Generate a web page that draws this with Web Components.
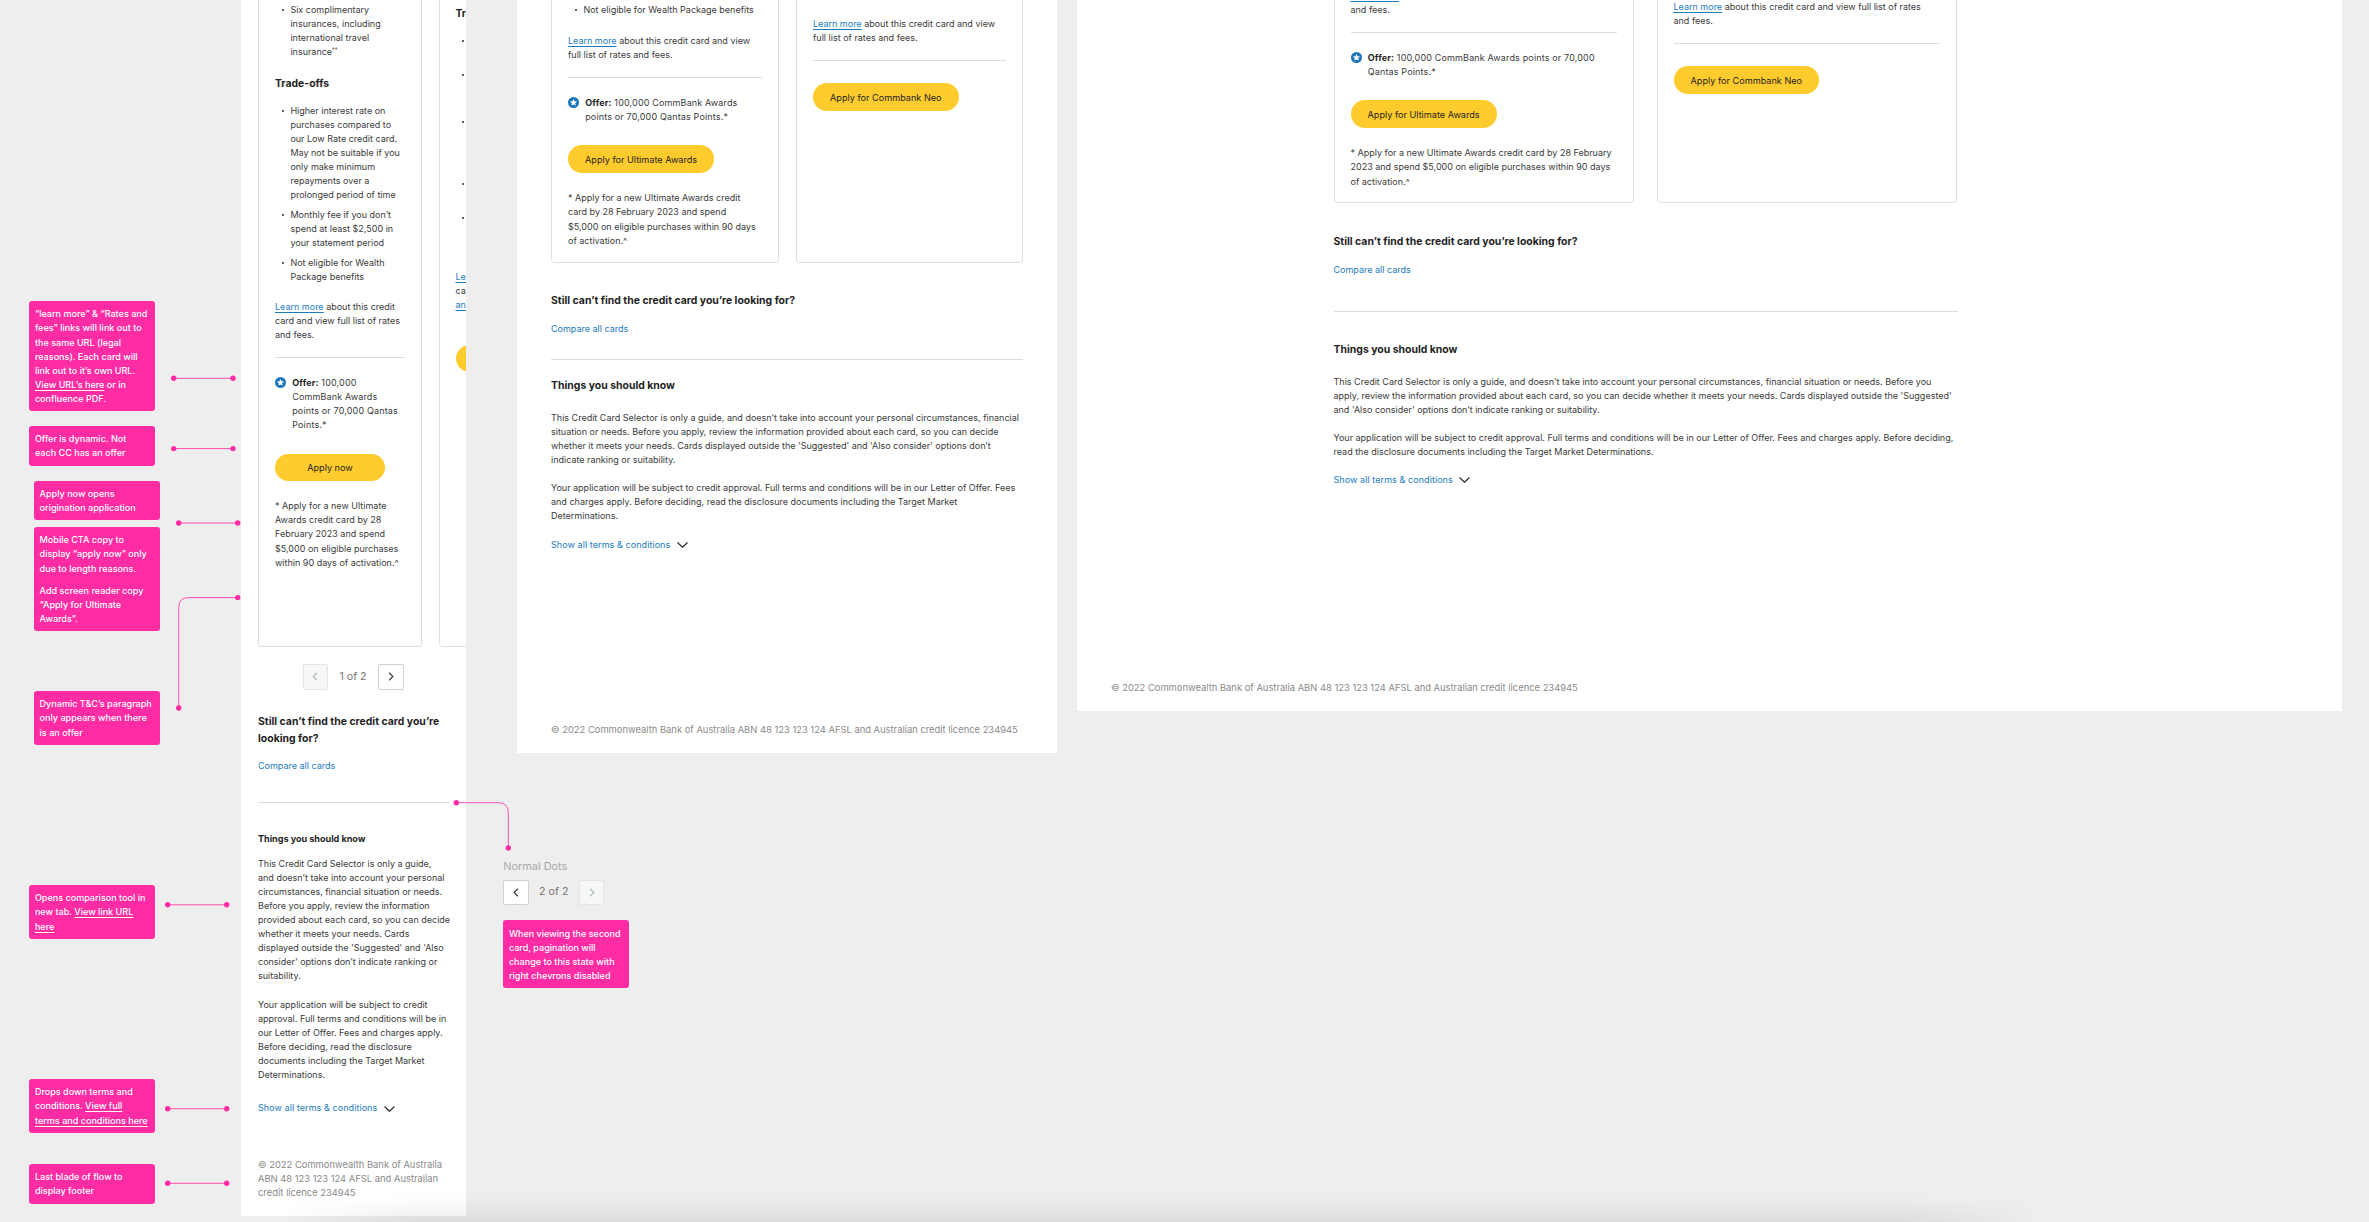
<!doctype html>
<html lang="en">
<head>
<meta charset="utf-8">
<title>Credit card selector annotations</title>
<style>
	html, body { margin: 0; padding: 0; background: #eeeeee; }
</style>
</head>
<body>
<cc-board>

	<!-- mobile blade -->
	<cc-artboard style="--x:240.5px;--w:225px;--h:1216px;--pad:17.5px">
		<cc-cards style="--h:647px;--gap:17px">
			<cc-card style="--w:163.5px;--pt:3px">
				<cc-bullet>Six complimentary<br>insurances, including<br>international travel<br>insurance<sup>††</sup></cc-bullet>
				<cc-heading style="margin-top:16px">Trade-offs</cc-heading>
				<cc-bullet style="margin-top:11.5px">Higher interest rate on<br>purchases compared to<br>our Low Rate credit card.<br>May not be suitable if you<br>only make minimum<br>repayments over a<br>prolonged period of time</cc-bullet>
				<cc-bullet style="margin-top:5.5px">Monthly fee if you don’t<br>spend at least $2,500 in<br>your statement period</cc-bullet>
				<cc-bullet style="margin-top:5.8px">Not eligible for Wealth<br>Package benefits</cc-bullet>
				<cc-para style="margin-top:16.4px"><cc-link underline>Learn more</cc-link> about this credit<br>card and view full list of rates<br>and fees.</cc-para>
				<cc-rule style="margin-top:15px"></cc-rule>
				<cc-offer style="margin-top:17.4px"><b>Offer:</b> 100,000<br>CommBank Awards<br>points or 70,000 Qantas<br>Points.*</cc-offer>
				<cc-apply style="margin-top:21.8px;width:110px;height:27.5px;padding:1px 0 0">Apply now</cc-apply>
				<cc-para style="margin-top:18px">* Apply for a new Ultimate<br>Awards credit card by 28<br>February 2023 and spend<br>$5,000 on eligible purchases<br>within 90 days of activation.^</cc-para>
			</cc-card>
			<cc-card style="--w:163.5px;--pt:4.5px">
				<cc-heading>Trade-offs</cc-heading>
				<cc-bullet style="margin-top:12px" lines="2"></cc-bullet>
				<cc-bullet style="margin-top:6px" lines="3"></cc-bullet>
				<cc-bullet style="margin-top:5px" lines="4"></cc-bullet>
				<cc-bullet style="margin-top:6px" lines="2"></cc-bullet>
				<cc-bullet style="margin-top:6px" lines="3"></cc-bullet>
				<cc-para style="margin-top:16.2px"><cc-link underline>Learn more</cc-link> about this credit<br>card and view full list of rates<br><cc-link underline>and fees.</cc-link></cc-para>
				<cc-apply style="margin-top:33px;width:110px;height:27.5px;padding:1px 0 0">Apply now</cc-apply>
			</cc-card>
		</cc-cards>
		<cc-pager style="margin:17px auto 0" page="1"></cc-pager>
		<cc-heading style="margin-top:23px">Still can’t find the credit card you’re<br>looking for?</cc-heading>
		<cc-link style="margin-top:12.9px;display:block">Compare all cards</cc-link>
		<cc-rule style="margin-top:28.9px;width:191px"></cc-rule>
		<cc-heading size="small" style="margin-top:28.3px">Things you should know</cc-heading>
		<cc-para style="margin-top:11.3px">This Credit Card Selector is only a guide,<br>and doesn’t take into account your personal<br>circumstances, financial situation or needs.<br>Before you apply, review the information<br>provided about each card, so you can decide<br>whether it meets your needs. Cards<br>displayed outside the 'Suggested' and 'Also<br>consider' options don’t indicate ranking or<br>suitability.</cc-para>
		<cc-para style="margin-top:14px">Your application will be subject to credit<br>approval. Full terms and conditions will be in<br>our Letter of Offer. Fees and charges apply.<br>Before deciding, read the disclosure<br>documents including the Target Market<br>Determinations.</cc-para>
		<cc-terms style="margin-top:19.6px"></cc-terms>
		<cc-legal>© 2022 Commonwealth Bank of Australia<br>ABN 48 123 123 124 AFSL and Australian<br>credit licence 234945</cc-legal>
	</cc-artboard>

	<!-- tablet blade -->
	<cc-artboard style="--x:517px;--w:540px;--h:753px;--pad:34px">
		<cc-cards style="--h:262.7px;--gap:17.5px">
			<cc-card style="--w:227.5px;--pt:3px">
				<cc-bullet>Not eligible for Wealth Package benefits</cc-bullet>
				<cc-para style="margin-top:16.7px"><cc-link underline>Learn more</cc-link> about this credit card and view<br>full list of rates and fees.</cc-para>
				<cc-rule style="margin-top:15.5px"></cc-rule>
				<cc-offer style="margin-top:17.4px"><b>Offer:</b> 100,000 CommBank Awards<br>points or 70,000 Qantas Points.*</cc-offer>
				<cc-apply style="margin-top:21.2px">Apply for Ultimate Awards</cc-apply>
				<cc-para style="margin-top:18px">* Apply for a new Ultimate Awards credit<br>card by 28 February 2023 and spend<br>$5,000 on eligible purchases within 90 days<br>of activation.^</cc-para>
			</cc-card>
			<cc-card style="--w:227px;--pt:17px">
				<cc-para><cc-link underline>Learn more</cc-link> about this credit card and view<br>full list of rates and fees.</cc-para>
				<cc-rule style="margin-top:15.2px"></cc-rule>
				<cc-apply style="margin-top:21.7px">Apply for Commbank Neo</cc-apply>
			</cc-card>
		</cc-cards>
		<cc-heading style="margin-top:29.1px">Still can’t find the credit card you’re looking for?</cc-heading>
		<cc-link style="margin-top:13.2px;display:block">Compare all cards</cc-link>
		<cc-rule style="margin-top:23.3px;width:472px"></cc-rule>
		<cc-heading style="margin-top:16.5px">Things you should know</cc-heading>
		<cc-para style="margin-top:17.2px">This Credit Card Selector is only a guide, and doesn’t take into account your personal circumstances, financial<br>situation or needs. Before you apply, review the information provided about each card, so you can decide<br>whether it meets your needs. Cards displayed outside the 'Suggested' and 'Also consider' options don’t<br>indicate ranking or suitability.</cc-para>
		<cc-para style="margin-top:14px">Your application will be subject to credit approval. Full terms and conditions will be in our Letter of Offer. Fees<br>and charges apply. Before deciding, read the disclosure documents including the Target Market<br>Determinations.</cc-para>
		<cc-terms style="margin-top:14.2px"></cc-terms>
		<cc-legal>© 2022 Commonwealth Bank of Australia ABN 48 123 123 124 AFSL and Australian credit licence 234945</cc-legal>
	</cc-artboard>

	<!-- desktop blade -->
	<cc-artboard style="--x:1077px;--w:1265px;--h:711px;--pad:34px">
		<cc-stack style="margin-left:222.5px;width:624px">
			<cc-cards style="--h:203px;--gap:23px">
				<cc-card style="--w:300px;--pt:0px">
					<cc-para style="margin-top:-11px"><cc-link underline>Learn more</cc-link> about this credit card and view full list of rates<br>and fees.</cc-para>
					<cc-rule style="margin-top:15.3px"></cc-rule>
					<cc-offer style="margin-top:17.4px"><b>Offer:</b> 100,000 CommBank Awards points or 70,000<br>Qantas Points.*</cc-offer>
					<cc-apply style="margin-top:21.2px">Apply for Ultimate Awards</cc-apply>
					<cc-para style="margin-top:18px">* Apply for a new Ultimate Awards credit card by 28 February<br>2023 and spend $5,000 on eligible purchases within 90 days<br>of activation.^</cc-para>
				</cc-card>
				<cc-card style="--w:300.8px;--pt:0px">
					<cc-para><cc-link underline>Learn more</cc-link> about this credit card and view full list of rates<br>and fees.</cc-para>
					<cc-rule style="margin-top:15.2px"></cc-rule>
					<cc-apply style="margin-top:21.7px">Apply for Commbank Neo</cc-apply>
				</cc-card>
			</cc-cards>
			<cc-heading style="margin-top:29.8px">Still can’t find the credit card you’re looking for?</cc-heading>
			<cc-link style="margin-top:13.2px;display:block">Compare all cards</cc-link>
			<cc-rule style="margin-top:34.3px"></cc-rule>
			<cc-heading style="margin-top:28.2px">Things you should know</cc-heading>
			<cc-para style="margin-top:17.2px">This Credit Card Selector is only a guide, and doesn’t take into account your personal circumstances, financial situation or needs. Before you<br>apply, review the information provided about each card, so you can decide whether it meets your needs. Cards displayed outside the 'Suggested'<br>and 'Also consider' options don’t indicate ranking or suitability.</cc-para>
			<cc-para style="margin-top:14px">Your application will be subject to credit approval. Full terms and conditions will be in our Letter of Offer. Fees and charges apply. Before deciding,<br>read the disclosure documents including the Target Market Determinations.</cc-para>
			<cc-terms style="margin-top:13.9px"></cc-terms>
		</cc-stack>
		<cc-legal>© 2022 Commonwealth Bank of Australia ABN 48 123 123 124 AFSL and Australian credit licence 234945</cc-legal>
	</cc-artboard>

	<!-- annotations -->
	<cc-note style="--x:29.3px;--y:301px">“learn more” &amp; “Rates and fees” links will link out to the same URL (legal reasons). Each card will link out to it’s own URL. <u>View URL’s here</u> or in confluence PDF.</cc-note>
	<cc-wire x1="173.7" y1="378.3" x2="233" y2="378.3"></cc-wire>

	<cc-note style="--x:29.3px;--y:426px">Offer is dynamic. Not each CC has an offer</cc-note>
	<cc-wire x1="173.7" y1="448.6" x2="233" y2="448.6"></cc-wire>

	<cc-note style="--x:34px;--y:480.6px">Apply now opens origination application</cc-note>
	<cc-wire x1="178.7" y1="523" x2="237.7" y2="523"></cc-wire>

	<cc-note style="--x:34px;--y:527px">Mobile CTA copy to display “apply now” only due to length reasons.<cc-notegap></cc-notegap>Add screen reader copy “Apply for Ultimate Awards”.</cc-note>

	<cc-note style="--x:34px;--y:691px">Dynamic T&amp;C’s paragraph only appears when there is an offer</cc-note>
	<cc-wire x1="237.7" y1="597.6" x2="178.7" y2="708" bend="10"></cc-wire>

	<cc-note style="--x:29.3px;--y:885px">Opens comparison tool in new tab. <u>View link URL here</u></cc-note>
	<cc-wire x1="167.7" y1="904.8" x2="226.7" y2="904.8"></cc-wire>

	<cc-note style="--x:29.3px;--y:1079px">Drops down terms and conditions. <u>View full terms and conditions here</u></cc-note>
	<cc-wire x1="167.7" y1="1108.7" x2="226.7" y2="1108.7"></cc-wire>

	<cc-note style="--x:29.3px;--y:1164px">Last blade of flow to display footer</cc-note>
	<cc-wire x1="167.7" y1="1183.3" x2="226.7" y2="1183.3"></cc-wire>

	<cc-wire x1="456.3" y1="802.7" x2="508.3" y2="848" bend="10"></cc-wire>
	<cc-variant style="--x:503.3px;--y:859px">
		<cc-label>Normal Dots</cc-label>
		<cc-pager style="margin-top:6.7px" page="2"></cc-pager>
		<cc-note inline style="margin-top:15px">When viewing the second card, pagination will change to this state with right chevrons disabled</cc-note>
	</cc-variant>
</cc-board>

<script>
const INK = "#3b3b3b";
const LINK = "#1c7cbf";
const PINK = "#ff2ca3";

// plain elements: just a style block and a slot
function plain(name, css, html = "<slot></slot>") {
	customElements.define(name, class extends HTMLElement {
		constructor() {
			super();
			this.attachShadow({ mode: "open" });
			this.shadowRoot.innerHTML = `<style>${css}</style>${html}`;
		}
	});
}

plain("cc-board", `
	:host {
		display: block;
		position: relative;
		width: 2369px;
		height: 1222px;
		overflow: hidden;
		background: #eeeeee;
		font-family: Inter, "Liberation Sans", sans-serif;
		font-size: 9px;
		line-height: 14.07px;
		color: ${INK};
	}
	.floor {
		position: absolute;
		left: 280px;
		bottom: 0;
		width: 1760px;
		height: 26px;
		background: linear-gradient(rgba(0,0,0,0), rgba(0,0,0,.07));
		-webkit-mask-image: linear-gradient(90deg, transparent, #000 8%, #000 92%, transparent);
		mask-image: linear-gradient(90deg, transparent, #000 8%, #000 92%, transparent);
	}
`, `<slot></slot><div class="floor"></div>`);

plain("cc-artboard", `
	:host {
		position: absolute;
		top: 0;
		left: var(--x);
		width: var(--w);
		height: var(--h);
		box-sizing: border-box;
		display: flex;
		flex-direction: column;
		align-items: flex-start;
		padding: 0 var(--pad) 16px;
		background: #fff;
		overflow: hidden;
	}
`);

plain("cc-stack", `:host { display: block; flex: none; }`);
plain("cc-cards", `:host { display: flex; gap: var(--gap); height: var(--h); flex: none; }`);
plain("cc-card", `
	:host {
		display: block;
		flex: none;
		box-sizing: border-box;
		width: var(--w);
		height: 100%;
		padding: var(--pt) 16px 0;
		background: #fff;
		border: 1px solid #dedede;
		border-top: 0;
		border-bottom: 1.5px solid #e2e2e2;
		border-radius: 0 0 4px 4px;
	}
`);

plain("cc-heading", `
	:host { display: block; font-size: 10.45px; line-height: 17px; font-weight: 700; color: #1f1f1f; white-space: nowrap; }
	:host([size="small"]) { font-size: 9.05px; line-height: 14px; }
`);
plain("cc-para", `:host { display: block; white-space: nowrap; }`);
plain("cc-link", `
	:host { color: ${LINK}; white-space: nowrap; }
	:host([underline]) { text-decoration: underline; text-underline-offset: 1.5px; text-decoration-thickness: 1px; }
`);
plain("cc-rule", `:host { display: block; height: 1px; background: #dddddd; }`);
plain("cc-legal", `
	:host { display: block; margin-top: auto; font-size: 9.4px; color: #8a8a8a; white-space: nowrap; }
`);
plain("cc-apply", `
	:host {
		display: flex;
		align-items: center;
		justify-content: center;
		box-sizing: border-box;
		width: max-content;
		height: 28.3px;
		padding: 1px 17px 0;
		border-radius: 15px;
		background: #ffcb2d;
		color: #232323;
		font-size: 9.15px;
		white-space: nowrap;
	}
`);
plain("cc-offer", `
	:host { display: flex; gap: 6.2px; white-space: nowrap; letter-spacing: .15px; }
	svg { flex: none; width: 11px; height: 11px; margin-top: 1.5px; }
	::slotted(b) { color: #1f1f1f; }
`, `<svg viewBox="0 0 22 22"><circle cx="11" cy="11" r="11" fill="#1a75bb"/><path fill="#fff" d="M11 3.8l2.1 4.5 4.9.6-3.6 3.4 1 4.9-4.4-2.4-4.4 2.4 1-4.9L4 8.9l4.9-.6z"/></svg><div><slot></slot></div>`);
plain("cc-note", `
	:host {
		position: absolute;
		left: var(--x);
		top: var(--y);
		display: block;
		box-sizing: border-box;
		width: 125.7px;
		padding: 6.4px 5.6px 5px;
		border-radius: 3px;
		background: ${PINK};
		color: #fff;
		font-weight: 500;
		font-size: 9.05px;
	}
	:host([inline]) { position: static; }
	::slotted(u) { text-underline-offset: 1.5px; }
`);
plain("cc-notegap", `:host { display: block; height: 8px; }`);
plain("cc-variant", `:host { position: absolute; left: var(--x); top: var(--y); display: block; width: 126px; }`);
plain("cc-label", `:host { display: block; font-size: 10.9px; line-height: 14px; color: #a9a9a9; white-space: nowrap; }`);
plain("cc-terms", `
	:host { display: flex; align-items: center; gap: 6.4px; color: ${LINK}; white-space: nowrap; }
	span { letter-spacing: .07px; }
	svg { width: 11px; height: 6px; }
`, `<span>Show all terms &amp; conditions</span><svg viewBox="0 0 11 6"><path d="M.5.5l5 4.8 5-4.8" fill="none" stroke="#2d2d2d" stroke-width="1.2"/></svg>`);

class CcBullet extends HTMLElement {
	constructor() {
		super();
		this.attachShadow({ mode: "open" });
	}
	connectedCallback() {
		// cards clipped by the blade only show their dots, so "lines" keeps the height without text
		const lines = this.getAttribute("lines");
		const min = lines ? `min-height: ${lines * 14.07}px;` : "";
		this.shadowRoot.innerHTML = `
			<style>
				:host { display: flex; white-space: nowrap; ${min} }
				.dot { flex: none; width: 15.4px; }
				.dot::before { content: ""; display: block; width: 2.2px; height: 2.2px; margin: 6px 0 0 6.6px; border-radius: 50%; background: #2b2b2b; }
				::slotted(sup) { font-size: 5.5px; line-height: 0; vertical-align: 3px; }
			</style>
			<div class="dot"></div><div><slot></slot></div>`;
	}
}
customElements.define("cc-bullet", CcBullet);

class CcPager extends HTMLElement {
	constructor() {
		super();
		this.attachShadow({ mode: "open" });
	}
	connectedCallback() {
		const page = Number(this.getAttribute("page") || 1);
		const chevron = (d, off) => `
			<div class="btn ${off ? "off" : ""}">
				<svg viewBox="0 0 8 12"><path d="${d}" fill="none" stroke="${off ? "#b4b9bc" : "#3d4145"}" stroke-width="1.6"/></svg>
			</div>`;
		this.shadowRoot.innerHTML = `
			<style>
				:host { display: flex; align-items: center; justify-content: space-between; box-sizing: border-box; width: 101px; height: 25.5px; flex: none; color: #777; font-size: 10.7px; }
				.btn { display: flex; align-items: center; justify-content: center; box-sizing: border-box; width: 25.5px; height: 25.5px; background: #fff; border: 1px solid #cfd2d4; border-radius: 2px; }
				.off { background: #f6f8f8; border-color: #e3e5e6; }
				svg { width: 6px; height: 9px; }
			</style>
			${chevron("M6.5 1L1.5 6l5 5", page == 1)}
			<span>${page} of 2</span>
			${chevron("M1.5 1l5 5-5 5", page == 2)}`;
	}
}
customElements.define("cc-pager", CcPager);

class CcWire extends HTMLElement {
	constructor() {
		super();
		this.attachShadow({ mode: "open" });
	}
	connectedCallback() {
		const [x1, y1, x2, y2] = ["x1", "y1", "x2", "y2"].map(k => Number(this.getAttribute(k)));
		const bend = Number(this.getAttribute("bend") || 0);
		const turn = Math.sign(x2 - x1);
		const d = bend
			? `M${x1} ${y1}H${x2 - turn * bend}Q${x2} ${y1} ${x2} ${y1 + bend}V${y2}`
			: `M${x1} ${y1}L${x2} ${y2}`;
		this.shadowRoot.innerHTML = `
			<style>
				:host { position: absolute; left: 0; top: 0; display: block; width: 0; height: 0; }
				svg { position: absolute; left: 0; top: 0; width: 2369px; height: 1222px; overflow: visible; pointer-events: none; }
			</style>
			<svg viewBox="0 0 2369 1222">
				<path d="${d}" fill="none" stroke="#ff4fb2" stroke-width="1"/>
				<circle cx="${x1}" cy="${y1}" r="2.7" fill="${PINK}"/>
				<circle cx="${x2}" cy="${y2}" r="2.7" fill="${PINK}"/>
			</svg>`;
	}
}
customElements.define("cc-wire", CcWire);
</script>
</body>
</html>
